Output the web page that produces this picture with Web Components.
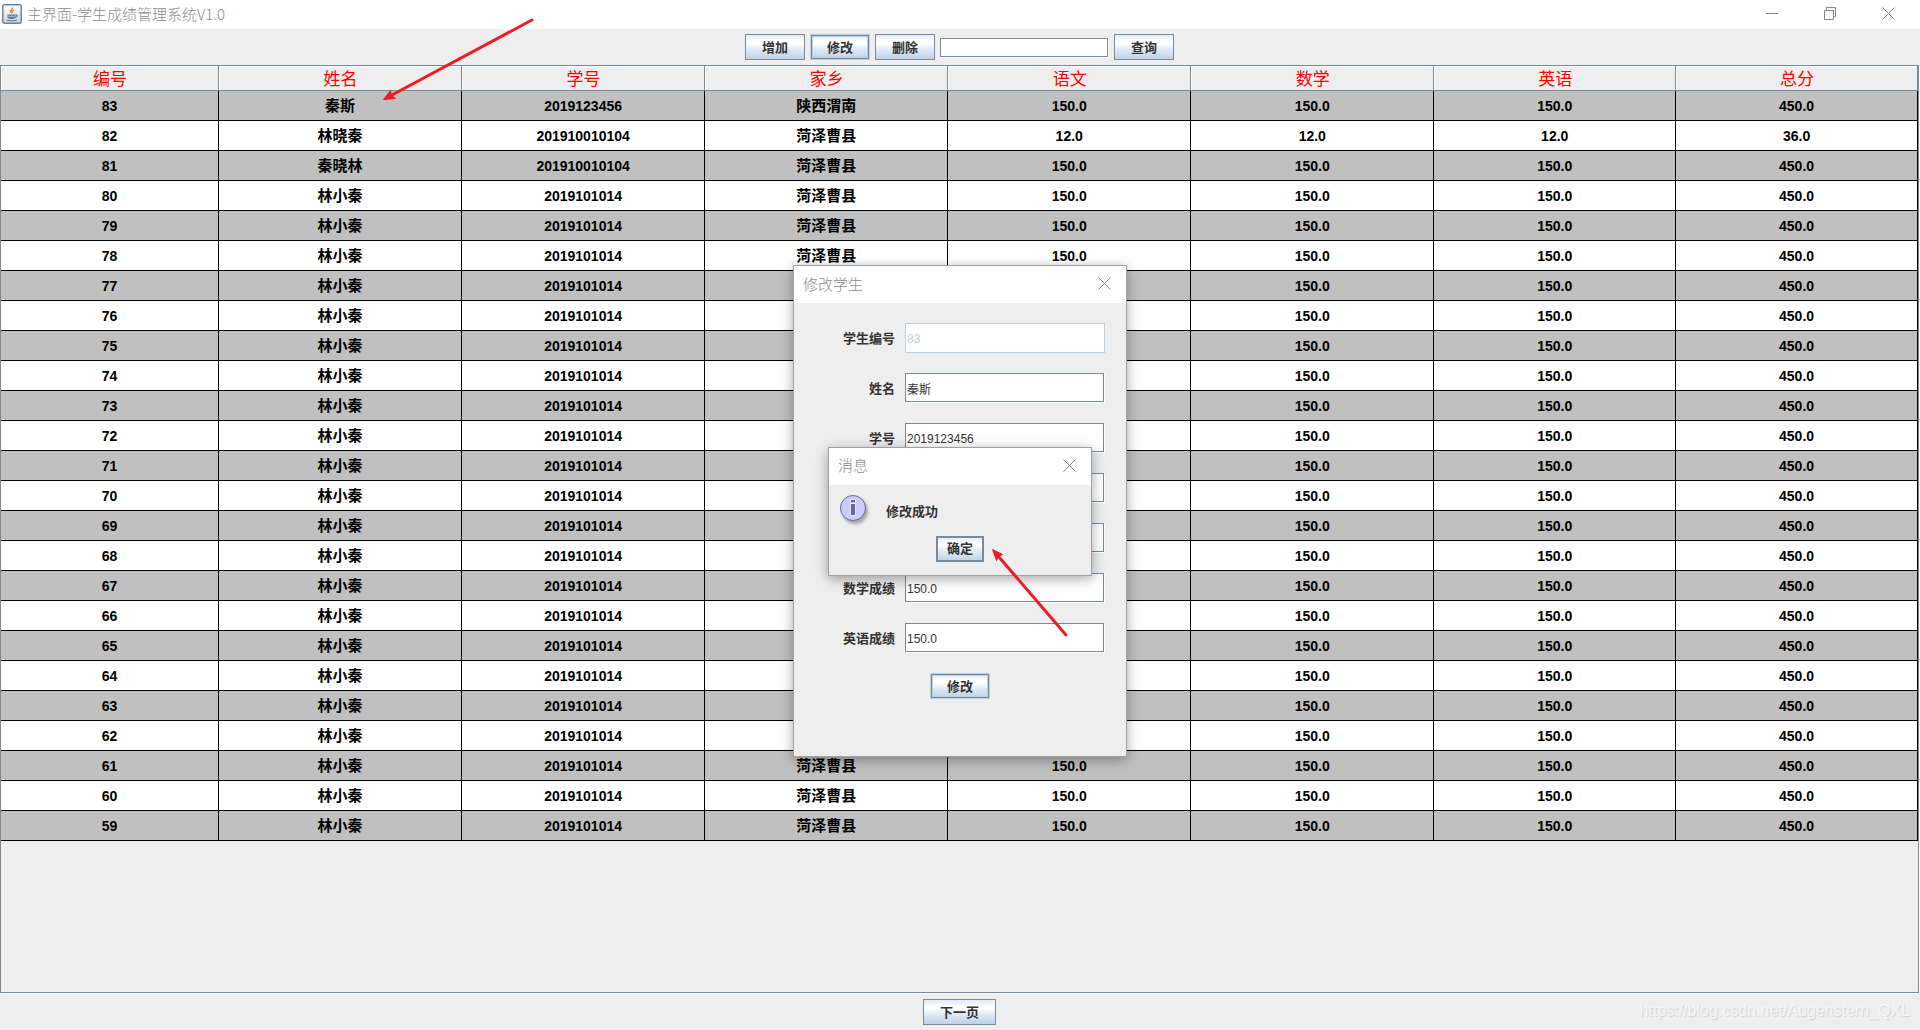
<!DOCTYPE html>
<html lang="zh-CN">
<head>
<meta charset="utf-8">
<title>主界面-学生成绩管理系统V1.0</title>
<style>
  html, body { height: 100%; margin: 0; }
  body {
    --line: #7a8a99;
    --glow: #b8cfe5;
    --panel: #eeeeee;
    background: var(--panel);
    color: #333;
    font-family: "Liberation Sans", "Noto Sans CJK SC", sans-serif;
    overflow: hidden;
  }
</style>
</head>
<body>
<main-window></main-window>

<script>
const define = (name, html, setup) => {
  const template = document.createElement('template');
  template.innerHTML = html;
  customElements.define(name, class extends HTMLElement {
    connectedCallback() {
      if (this.shadowRoot) return;
      const root = this.attachShadow({ mode: 'open' });
      root.append(template.content.cloneNode(true));
      if (setup) setup(this, root);
    }
  });
};

/* Metal look push button; kind = plain | hover | default */
define('metal-button', `
  <style>
    :host { display: inline-flex; }
    button {
      box-sizing: border-box; height: 26px; padding: 2px 16px 0; margin: 0;
      border: 1px solid var(--line); border-radius: 0;
      background: linear-gradient(#dde8f3, #fff 30%, #fff 36%, #dde8f3 62%, #b8cfe5);
      background-origin: border-box;
      color: #333; font: bold 13px/22px "Liberation Sans", "Noto Sans CJK SC", sans-serif;
      white-space: nowrap;
    }
    :host([kind="hover"]) button {
      border-color: var(--glow);
      box-shadow: inset 0 0 0 1px var(--line), inset 0 0 0 2px var(--glow);
    }
    :host([kind="default"]) button { border-width: 2px; padding: 0 9px; line-height: 22px; }
  </style>
  <button type="button"><slot></slot></button>`);

/* Caption button of a window: min | max | close */
const captionIcons = {
  min: ['最小化', '<path d="M0 6.5h12"/>'],
  max: ['还原', '<path d="M.5 3.5h9v9h-9zM2.500 3.500v-3h9v9h-2"/>'],
  close: ['关闭', '<path d="M.5.5l12 12M12.500.5l-12 12"/>']
};
define('caption-button', `
  <style>
    :host { display: flex; }
    button { border: 0; padding: 0; margin: 0; background: none; display: flex; align-items: center; justify-content: center; width: var(--caption-width, 58px); }
    svg { display: block; width: 13px; height: 13px; fill: none; stroke: #888; }
  </style>
  <button type="button"><svg viewBox="0 0 13 13"></svg></button>`,
  (host, root) => {
    const [label, shape] = captionIcons[host.getAttribute('kind')];
    root.querySelector('button').setAttribute('aria-label', label);
    root.querySelector('svg').innerHTML = shape;
  });

define('java-icon', `
  <style>:host { display: block; } svg { display: block; }</style>
  <svg width="20" height="20" viewBox="0 0 20 20" aria-hidden="true">
    <defs><linearGradient id="g" x2="0" y2="1"><stop stop-color="#fff"/><stop offset="1" stop-color="#ccd3da"/></linearGradient></defs>
    <rect x=".75" y=".75" width="18.500" height="18.500" rx="2" fill="url(#g)" stroke="#6d8499" stroke-width="1.500"/>
    <path d="M10.500 3.500c1 1.700-2.500 2.500-2 4 .2 1 1 1.300 1.300 1.800M11.800 6c-1.700.8-2 1.700-1.300 3" fill="none" stroke="#e8822a" stroke-width="1.300"/>
    <path d="M5.500 10.500h8v2.500c0 1.500-1.500 2-4 2s-4-.5-4-2z" fill="#5f7f9e"/>
    <path d="M13.500 11c2.500-.4 2.500 2-.5 2.500M4.500 16c2.500 1 8 1 10.500 0" fill="none" stroke="#5f7f9e" stroke-width="1.200"/>
    <path d="M6 12.300h7" stroke="#b9cada" stroke-width=".8"/>
  </svg>`);

define('title-bar', `
  <style>
    :host { box-sizing: border-box; display: flex; background: #fff; height: 29px; padding: 0 3px 2px 0; color: #8c8c8c; }
    .label { flex: 1; display: flex; align-items: center; gap: 5px; padding-left: 2px; font: 15px/26px "Noto Sans CJK SC", sans-serif; font-weight: 300; }
    :host([dialog]) { height: 37px; padding-right: 1px; }
    :host([dialog]) .label { padding-left: 9px; }
  </style>
  <div class="label"><slot name="icon"></slot><span><slot></slot></span></div>
  <slot name="actions"></slot>`);

define('tool-bar', `
  <style>
    :host { display: flex; justify-content: center; align-items: center; gap: 5px; height: 36px; padding-right: 1px; }
    input {
      box-sizing: border-box; width: 168px; height: 19px; margin: 0 1px 0 0; padding: 0 2px;
      border: 1px solid var(--line); border-radius: 0; background: #fff; box-shadow: 1px 1px #fff;
      font: 12px "Liberation Sans", "Noto Sans CJK SC", sans-serif;
    }
  </style>
  <metal-button>增加</metal-button>
  <metal-button kind="hover">修改</metal-button>
  <metal-button>删除</metal-button>
  <input type="text" aria-label="查询条件">
  <metal-button>查询</metal-button>`);

define('score-table', `
  <style>
    :host { display: block; }
    table { width: 100%; table-layout: fixed; border-spacing: 0; border-collapse: separate; text-align: center; }
    col.id { width: 218px; }
    col.wide { width: 12.68%; }
    th, td { box-sizing: border-box; padding: 0; overflow: hidden; white-space: nowrap; }
    th {
      height: 25px; padding: 3px 0 0 1px; font-weight: 400; font-size: 17px; line-height: 21px; color: #f00;
      border-right: 1px solid var(--line); border-bottom: 1px solid var(--line);
      box-shadow: inset 1px 1px #fff;
    }
    td {
      height: 30px; font-weight: 700; font-size: 15px; line-height: 28px; color: #000; background: #fff;
      border-right: 1px solid #000; border-bottom: 1px solid #000;
    }
    td.num { font-size: 14px; }
    tr:nth-child(odd) td { background: #c0c0c0; }
  </style>
  <table>
    <colgroup><col class="id"><col class="wide" span="5"><col span="2"></colgroup>
    <thead><tr></tr></thead>
    <tbody></tbody>
  </table>`,
  (host, root) => {
    const head = root.querySelector('thead tr');
    for (const name of ['编号', '姓名', '学号', '家乡', '语文', '数学', '英语', '总分']) {
      const th = document.createElement('th');
      th.scope = 'col';
      th.textContent = name;
      head.append(th);
    }
    const special = {
      83: ['秦斯', '2019123456', '陕西渭南', '150.0', '450.0'],
      82: ['林晓秦', '201910010104', '菏泽曹县', '12.0', '36.0'],
      81: ['秦晓林', '201910010104', '菏泽曹县', '150.0', '450.0']
    };
    const usual = ['林小秦', '2019101014', '菏泽曹县', '150.0', '450.0'];
    const body = root.querySelector('tbody');
    for (let id = 83; id >= 59; id--) {
      const [name, no, home, mark, total] = special[id] || usual;
      const tr = body.insertRow();
      for (const value of [id, name, no, home, mark, mark, mark, total]) {
        const td = tr.insertCell();
        td.textContent = value;
        if (!isNaN(value)) td.className = 'num';
      }
    }
  });

define('form-field', `
  <style>
    :host { display: flex; align-items: center; gap: 10px; height: 30px; }
    label { width: 81px; padding-top: 2px; text-align: right; font-weight: 700; font-size: 13px; line-height: 20px; }
    input {
      box-sizing: border-box; width: 199px; height: 29px; margin: 0 1px 1px 0; padding: 2px 1px 0;
      border: 1px solid var(--line); border-radius: 0; background: #fff; box-shadow: 1px 1px #fff; color: #333;
      font: 12px "Liberation Sans", "Noto Sans CJK SC", sans-serif;
    }
    input:disabled { width: 200px; height: 30px; margin: 0; border-color: var(--glow); color: var(--glow); box-shadow: none; }
  </style>
  <label for="value"></label><input id="value" type="text">`,
  (host, root) => {
    root.querySelector('label').textContent = host.getAttribute('label');
    const input = root.querySelector('input');
    input.value = host.getAttribute('value');
    input.disabled = host.hasAttribute('disabled');
  });

define('metal-dialog', `
  <style>
    :host { display: grid; place-items: center; position: absolute; inset: 0 0 8px; pointer-events: none; }
    section {
      box-sizing: border-box; width: var(--dialog-width); border: 1px solid #a0a0a0;
      background: var(--panel); box-shadow: 0 3px 12px rgba(0,0,0,.35); pointer-events: auto;
    }
    title-bar { --caption-width: 41px; }
  </style>
  <section role="dialog">
    <title-bar dialog><span></span><caption-button slot="actions" kind="close"></caption-button></title-bar>
    <slot></slot>
  </section>`,
  (host, root) => {
    const name = host.getAttribute('label');
    root.querySelector('span').textContent = name;
    root.querySelector('section').setAttribute('aria-label', name);
  });

define('edit-form', `
  <style>
    :host { display: block; }
    form { display: flex; flex-direction: column; gap: 20px; padding: 20px 20px 57px; }
    metal-button { align-self: center; }
  </style>
  <form>
    <form-field label="学生编号" value="83" disabled></form-field>
    <form-field label="姓名" value="秦斯"></form-field>
    <form-field label="学号" value="2019123456"></form-field>
    <form-field label="家乡" value="陕西渭南"></form-field>
    <form-field label="语文成绩" value="150.0"></form-field>
    <form-field label="数学成绩" value="150.0"></form-field>
    <form-field label="英语成绩" value="150.0"></form-field>
    <metal-button kind="hover">修改</metal-button>
  </form>`);

define('message-body', `
  <style>
    :host { display: flex; flex-direction: column; padding: 10px 10px 13px; }
    .row { display: flex; align-items: flex-start; gap: 15px; height: 34px; margin-bottom: 7px; }
    p { align-self: center; margin: 0; font-weight: 700; font-size: 13px; line-height: 20px; }
    metal-button { align-self: center; }
    svg { display: block; }
  </style>
  <div class="row">
    <svg width="32" height="32" viewBox="0 0 32 32" aria-hidden="true">
      <defs><filter id="s" x="-20%" y="-20%" width="150%" height="150%"><feGaussianBlur stdDeviation="1.500"/></filter></defs>
      <circle cx="16" cy="16" r="13" fill="#888" opacity=".7" filter="url(#s)"/>
      <circle cx="14" cy="13" r="12.500" fill="#ccccff" stroke="#666699"/>
      <path d="M11.500 4.500h5v16h-5z" fill="#fff"/>
      <path d="M12 5h4v2.500h-4zM12 9h4v11h-4z" fill="#666699"/>
    </svg>
    <p>修改成功</p>
  </div>
  <metal-button kind="default">确定</metal-button>`);

/* Red pointer arrows drawn over the whole window */
define('pointer-arrows', `
  <style>
    :host { position: absolute; inset: 0; pointer-events: none; }
    svg { display: block; width: 100%; height: 100%; fill: #ed1c24; stroke: #ed1c24; }
  </style>
  <svg aria-hidden="true">
    <path d="M532 20L392 95" stroke-width="3" stroke-linecap="round"/>
    <path d="M383.500 99.500l7-9 1 5 4 3z" stroke-width="1"/>
    <path d="M1066 635L999 557" stroke-width="3" stroke-linecap="round"/>
    <path d="M992.500 549.500l10 5-4 2-2 4z" stroke-width="1"/>
  </svg>`);

define('main-window', `
  <style>
    :host { display: flex; flex-direction: column; position: relative; height: 100vh; overflow: hidden; }
    .pane { flex: 1; min-height: 0; margin-right: 1px; border: 1px solid var(--line); box-shadow: 1px 1px #fff; }
    footer { display: flex; justify-content: center; padding: 6px 1px 5px 0; }
    .mark {
      position: absolute; right: 10px; bottom: 7px; font-size: 16px; line-height: 24px;
      color: #f6f6f6; text-shadow: 1px 1px 1px #d2d2d2;
    }
    .edit { --dialog-width: 334px; }
    .message { --dialog-width: 264px; }
  </style>
  <title-bar>
    <java-icon slot="icon"></java-icon>主界面-学生成绩管理系统V1.0
    <caption-button slot="actions" kind="min"></caption-button>
    <caption-button slot="actions" kind="max"></caption-button>
    <caption-button slot="actions" kind="close"></caption-button>
  </title-bar>
  <tool-bar></tool-bar>
  <div class="pane"><score-table></score-table></div>
  <footer><metal-button>下一页</metal-button></footer>
  <metal-dialog class="edit" label="修改学生"><edit-form></edit-form></metal-dialog>
  <metal-dialog class="message" label="消息"><message-body></message-body></metal-dialog>
  <pointer-arrows></pointer-arrows>
  <div class="mark">https://blog.csdn.net/Augenstern_QXL</div>`);
</script>
</body>
</html>
